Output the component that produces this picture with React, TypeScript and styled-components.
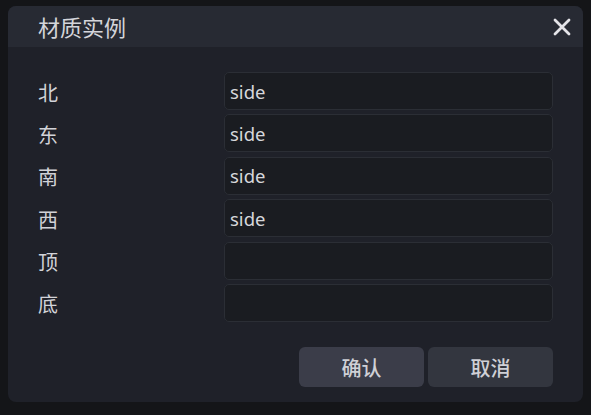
import styled, { createGlobalStyle } from "styled-components";

const GlobalStyle = createGlobalStyle`
  html, body {
    margin: 0;
    padding: 0;
    background: #141518;
  }
  body {
    font-family: "Noto Sans", "Noto Sans CJK SC", sans-serif;
  }
`;

const fields = [
  { label: "北", value: "side" },
  { label: "东", value: "side" },
  { label: "南", value: "side" },
  { label: "西", value: "side" },
  { label: "顶", value: "" },
  { label: "底", value: "" },
];

export default function App() {
  return (
    <Page>
      <GlobalStyle />
      <Dialog>
        <Header>
          <Title>材质实例</Title>
          <CloseButton aria-label="close">
            <svg width="18" height="18" viewBox="0 0 18 18">
              <path
                d="M2 2 L16 16 M16 2 L2 16"
                stroke="#e4e4e8"
                strokeWidth="2.8"
                strokeLinecap="round"
              />
            </svg>
          </CloseButton>
        </Header>
        <Body>
          <Form>
            {fields.map((f) => (
              <Row key={f.label}>
                <Label>{f.label}</Label>
                <Input defaultValue={f.value} />
              </Row>
            ))}
          </Form>
          <Actions>
            <Button $primary>确认</Button>
            <Button>取消</Button>
          </Actions>
        </Body>
      </Dialog>
    </Page>
  );
}

const Page = styled.div`
  width: 591px;
  height: 415px;
  padding: 6px 8px 0 8px;
  box-sizing: border-box;
`;

const Dialog = styled.div`
  width: 575px;
  height: 396px;
  background: #1f2129;
  border-radius: 8px;
  overflow: hidden;
  display: flex;
  flex-direction: column;
`;

const Header = styled.div`
  height: 41px;
  background: #272a33;
  display: flex;
  align-items: center;
  justify-content: space-between;
  padding: 0 12px 0 30px;
`;

const Title = styled.div`
  color: #d4d5da;
  font-size: 22px;
  font-family: "Noto Sans CJK SC", sans-serif;
  line-height: 1;
  margin-top: -1px;
`;

const CloseButton = styled.button`
  background: none;
  border: none;
  padding: 0;
  width: 18px;
  height: 18px;
  display: flex;
  cursor: pointer;
`;

const Body = styled.div`
  flex: 1;
  padding: 25px 30px 15px 30px;
  display: flex;
  flex-direction: column;
`;

const Form = styled.div`
  display: flex;
  flex-direction: column;
  gap: 4.4px;
`;

const Row = styled.div`
  display: grid;
  grid-template-columns: 186px 1fr;
  align-items: center;
`;

const Label = styled.div`
  color: #d2d3d8;
  font-size: 20px;
  font-family: "Noto Sans CJK SC", sans-serif;
  line-height: 1;
  padding-top: 3px;
`;

const Input = styled.input`
  height: 38px;
  box-sizing: border-box;
  background: #1a1c21;
  border: 1px solid #2b2e35;
  border-radius: 5px;
  color: #d6d7db;
  font-size: 18.5px;
  font-family: "Noto Sans", "Noto Sans CJK SC", sans-serif;
  padding: 0 5px;
  outline: none;
`;

const Actions = styled.div`
  margin-top: auto;
  display: flex;
  justify-content: flex-end;
  gap: 4px;
`;

const Button = styled.button<{ $primary?: boolean }>`
  width: 125px;
  height: 40px;
  border: none;
  border-radius: 6px;
  background: ${(p) => (p.$primary ? "#3b3d49" : "#33363f")};
  color: #cfd0d6;
  font-size: 20px;
  font-weight: 500;
  font-family: "Noto Sans CJK SC", sans-serif;
  cursor: pointer;
`;
